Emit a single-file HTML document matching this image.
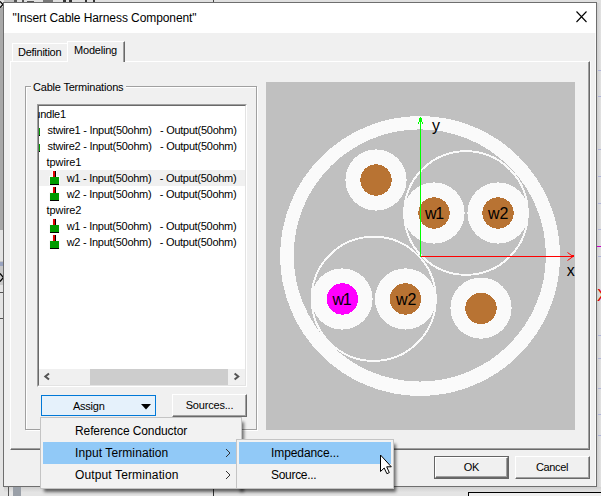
<!DOCTYPE html>
<html><head><meta charset="utf-8"><title>Insert Cable Harness Component</title>
<style>
html,body{margin:0;padding:0;}
body{width:601px;height:496px;overflow:hidden;position:relative;background:#fff;font-family:"Liberation Sans",sans-serif;font-size:11px;color:#000;}
.abs{position:absolute;}
#dlg{left:3px;top:2px;width:594px;height:485px;box-sizing:border-box;background:#f0f0f0;border:1px solid #6e6e6e;box-shadow:none;}
#title{left:0;top:0;width:592px;height:30px;background:#fff;}
#title span{position:absolute;left:8.5px;top:8px;font-size:12px;letter-spacing:-.08px;white-space:nowrap;}
.tab{font-size:11px;white-space:nowrap;letter-spacing:-.2px;}
.row{position:absolute;left:0;height:16px;line-height:16px;white-space:pre;font-size:11px;letter-spacing:-.27px;}
.btn{position:absolute;box-sizing:border-box;background:#f0f0f0;border:1px solid;border-color:#fff #696969 #696969 #fff;text-align:center;font-size:11px;box-shadow:inset -1px -1px 0 #a0a0a0;letter-spacing:-.2px;}
.menu{position:absolute;box-sizing:border-box;background:#f2f2f2;border:1px solid #c4c4c4;box-shadow:3px 4px 3px -1px rgba(0,0,0,.55);}
.mi{position:absolute;font-size:12px;white-space:nowrap;letter-spacing:.35px;line-height:22px;height:22px;}
.hl{position:absolute;background:#91c9f7;height:22px;}
.ico{position:absolute;width:9px;height:14px;}
.ico i{position:absolute;display:block;}
</style></head><body>
<!-- background app bits -->
<div class="abs" style="left:0;top:0;width:601px;height:3px;background:#e0e0e0;"></div><div class="abs" style="left:0;top:0;width:14px;height:3px;background:#c0c0c0;"></div><div class="abs" style="left:14px;top:0;width:3px;height:2px;background:#555;"></div><div class="abs" style="left:22px;top:0;width:2px;height:2px;background:#555;"></div><div class="abs" style="left:27px;top:1px;width:7px;height:1px;background:#555;"></div><div class="abs" style="left:43px;top:0;width:10px;height:2px;background:#777;"></div><div class="abs" style="left:63px;top:0;width:3px;height:2px;background:#333;"></div><div class="abs" style="left:69px;top:0;width:3px;height:2px;background:#333;"></div><div class="abs" style="left:85px;top:0;width:2px;height:2px;background:#333;"></div><div class="abs" style="left:93px;top:0;width:2px;height:2px;background:#333;"></div><div class="abs" style="left:213px;top:0;width:1px;height:2px;background:#444;"></div>
<div class="abs" style="left:0;top:0;width:4px;height:496px;background:#e4e4e4;"></div>
<div class="abs" style="left:0;top:7px;width:4px;height:223px;background:#a9a9a9;"></div>
<div class="abs" style="left:0;top:261px;width:4px;height:24px;background:#c8c8c8;"></div><div class="abs" style="left:0;top:262px;width:4px;height:4px;background:#9aa4c0;"></div><div class="abs" style="left:0;top:292px;width:4px;height:1px;background:#555;"></div><div class="abs" style="left:0;top:318px;width:4px;height:1px;background:#555;"></div>
<div class="abs" style="left:597px;top:3px;width:4px;height:493px;background:linear-gradient(90deg,#cecece,#e2e2e2);"></div><div class="abs" style="left:4px;top:487px;width:597px;height:9px;background:linear-gradient(180deg,#cfcfcf,#e4e4e4 60%);"></div><div class="abs" style="left:213px;top:487px;width:1px;height:9px;background:#333;"></div>
<div class="abs" style="left:468px;top:492px;width:133px;height:4px;border:1px solid #000;border-right:0;border-bottom:0;box-sizing:border-box;background:#efefef;z-index:1"></div>
<div class="abs" style="left:13px;top:487px;width:8px;height:9px;background:#9aa0a8;"></div>
<div class="abs" style="left:8px;top:487px;width:1px;height:9px;background:#555;"></div>
<div class="abs" style="left:598px;top:70px;width:3px;height:1px;background:#b0b4d8;"></div><div class="abs" style="left:598px;top:96px;width:3px;height:1px;background:#b0b4d8;"></div><div class="abs" style="left:598px;top:149px;width:3px;height:1px;background:#b0b4d8;"></div><div class="abs" style="left:598px;top:176px;width:3px;height:1px;background:#b0b4d8;"></div><div class="abs" style="left:598px;top:203px;width:3px;height:1px;background:#b0b4d8;"></div><div class="abs" style="left:598px;top:229px;width:3px;height:1px;background:#b0b4d8;"></div><div class="abs" style="left:598px;top:256px;width:3px;height:1px;background:#b0b4d8;"></div><div class="abs" style="left:598px;top:335px;width:3px;height:1px;background:#b0b4d8;"></div><div class="abs" style="left:598px;top:358px;width:3px;height:1px;background:#b0b4d8;"></div><div class="abs" style="left:598px;top:388px;width:3px;height:1px;background:#b0b4d8;"></div><div class="abs" style="left:598px;top:414px;width:3px;height:1px;background:#b0b4d8;"></div><div class="abs" style="left:598px;top:435px;width:3px;height:1px;background:#b0b4d8;"></div><div class="abs" style="left:597px;top:246px;width:4px;height:1px;background:#c800c8;"></div>
<svg class="abs" style="left:0;top:1px" width="4" height="7" viewBox="0 0 4 7"><path d="M0 0.5 L3 3.5 L0 6.5" stroke="#000" stroke-width="1.2" fill="none"/></svg><svg class="abs" style="left:0;top:273px" width="4" height="9" viewBox="0 0 4 9"><path d="M0 0.5 L3.500 4.500 L0 8.500" stroke="#000" stroke-width="1.2" fill="none"/></svg>
<div class="abs" style="left:597px;top:286px;color:#e00000;font-size:17px;">X</div>

<div class="abs" id="dlg">
 <div class="abs" id="title"><span>"Insert Cable Harness Component"</span>
  <svg class="abs" style="left:572px;top:8px" width="12" height="12" viewBox="0 0 12 12"><path d="M0.5 0.5 L10.5 11 M10.5 0.5 L0.5 11" stroke="#000" stroke-width="1.1" fill="none"/></svg>
 </div>
</div>

<div class="abs" style="left:595px;top:33px;width:1px;height:453px;background:#fafafa;"></div><div class="abs" style="left:590px;top:61px;width:1px;height:389px;background:#fafafa;"></div>
<!-- tab page -->
<div class="abs" style="left:10px;top:61px;width:580px;height:389px;box-sizing:border-box;border:1px solid #fff;border-right:1px solid #696969;border-bottom:1px solid #696969;"></div>
<div class="abs" style="left:11px;top:62px;width:578px;height:387px;box-sizing:border-box;border-right:1px solid #a0a0a0;border-bottom:1px solid #a0a0a0;"></div>
<!-- tabs -->
<div class="abs tab" style="left:12px;top:43px;width:56px;height:18px;box-sizing:border-box;border-left:1px solid #fff;border-top:1px solid #fff;"><span class="abs" style="left:5px;top:2px;letter-spacing:-.25px">Definition</span></div>
<div class="abs tab" style="left:67px;top:41px;width:58px;height:21px;box-sizing:border-box;background:#f0f0f0;border-left:1px solid #fff;border-top:1px solid #fff;border-right:1px solid #696969;box-shadow:inset -1px 0 0 #a0a0a0;"><span class="abs" style="left:6px;top:2px;">Modeling</span></div>

<!-- group box -->
<div class="abs" style="left:25px;top:86px;width:232px;height:344px;box-sizing:border-box;border:1px solid #a0a0a0;box-shadow:1px 1px 0 #fff, inset 1px 1px 0 #fff;"></div>
<div class="abs" style="left:31px;top:81px;background:#f0f0f0;padding:0 3px 0 2px;font-size:11px;white-space:nowrap;letter-spacing:-.2px;">Cable Terminations</div>

<!-- list -->
<div class="abs" id="list" style="left:37px;top:104px;width:210px;height:283px;box-sizing:border-box;background:#fff;border:1px solid #a0a0a0;border-right-color:#fff;border-bottom-color:#fff;overflow:hidden;">
 <div class="abs" style="left:0;top:0;right:0;bottom:0;border:1px solid #696969;border-right-color:#e3e3e3;border-bottom-color:#e3e3e3;"></div>
 <div class="abs" style="left:1px;top:65px;width:206px;height:16px;background:#f0f0f0;"></div>
 <div class="row" style="left:-9.5px;top:1px;">bundle1</div>
 <div class="abs" style="left:1px;top:23px;width:1px;height:7px;background:#009a00;border-bottom:1px solid #000"></div>
 <div class="abs" style="left:1px;top:39px;width:1px;height:7px;background:#009a00;border-bottom:1px solid #000"></div>
 <div class="row" style="left:9.5px;top:17px;">stwire1 - Input(50ohm)   - Output(50ohm)</div>
 <div class="row" style="left:9.5px;top:33px;">stwire2 - Input(50ohm)   - Output(50ohm)</div>
 <div class="row" style="left:8.6px;letter-spacing:-.1px;top:49px;">tpwire1</div>
 <div class="row" style="left:28.7px;top:65px;">w1 - Input(50ohm)   - Output(50ohm)</div>
 <div class="row" style="left:28.7px;top:81px;">w2 - Input(50ohm)   - Output(50ohm)</div>
 <div class="row" style="left:8.6px;letter-spacing:-.1px;top:97px;">tpwire2</div>
 <div class="row" style="left:28.7px;top:113px;">w1 - Input(50ohm)   - Output(50ohm)</div>
 <div class="row" style="left:28.7px;top:129px;">w2 - Input(50ohm)   - Output(50ohm)</div>
 <div class="ico" style="left:12px;top:66px;"><i style="left:0;top:6px;width:9px;height:7px;background:#009a00;box-shadow:0 0 0 1px #fafafa"></i><i style="left:3px;top:0;width:2px;height:6px;background:#e00000;border-right:1px solid #000;box-shadow:-1px 0 0 #fafafa,1px 0 0 #fafafa,0 -1px 0 #fafafa"></i><i style="left:0;top:13px;width:9px;height:1px;background:#000;"></i></div>
 <div class="ico" style="left:12px;top:82px;"><i style="left:0;top:6px;width:9px;height:7px;background:#009a00;box-shadow:0 0 0 1px #fafafa"></i><i style="left:3px;top:0;width:2px;height:6px;background:#e00000;border-right:1px solid #000;box-shadow:-1px 0 0 #fafafa,1px 0 0 #fafafa,0 -1px 0 #fafafa"></i><i style="left:0;top:13px;width:9px;height:1px;background:#000;"></i></div>
 <div class="ico" style="left:12px;top:114px;"><i style="left:0;top:6px;width:9px;height:7px;background:#009a00;box-shadow:0 0 0 1px #fafafa"></i><i style="left:3px;top:0;width:2px;height:6px;background:#e00000;border-right:1px solid #000;box-shadow:-1px 0 0 #fafafa,1px 0 0 #fafafa,0 -1px 0 #fafafa"></i><i style="left:0;top:13px;width:9px;height:1px;background:#000;"></i></div>
 <div class="ico" style="left:12px;top:130px;"><i style="left:0;top:6px;width:9px;height:7px;background:#009a00;box-shadow:0 0 0 1px #fafafa"></i><i style="left:3px;top:0;width:2px;height:6px;background:#e00000;border-right:1px solid #000;box-shadow:-1px 0 0 #fafafa,1px 0 0 #fafafa,0 -1px 0 #fafafa"></i><i style="left:0;top:13px;width:9px;height:1px;background:#000;"></i></div>
 <!-- scrollbar -->
 <div class="abs" style="left:1px;top:264px;width:206px;height:16px;background:#f0f0f0;"></div>
 <div class="abs" style="left:52px;top:264px;width:138px;height:16px;background:#cdcdcd;"></div>
 <svg class="abs" style="left:1px;top:264px" width="206" height="17" viewBox="0 0 206 17"><path d="M10 4.4 L6.3 7.5 L10 10.6 M195.6 4.4 L199.3 7.5 L195.6 10.6" stroke="#555" stroke-width="2" fill="none"/></svg>
</div>

<!-- preview -->
<svg class="abs" style="left:266px;top:82px" width="309" height="348" viewBox="266 82 309 348" shape-rendering="crispEdges">
 <rect x="266" y="82" width="309" height="348" fill="#c0c0c0"/>
 <circle cx="420.05" cy="256" r="140" fill="#fafafa"/><circle cx="419.8" cy="255.45" r="126.1" fill="#c0c0c0"/>
 <g fill="#fafafa">
  <circle cx="376" cy="180" r="30.6"/><circle cx="434" cy="213" r="30.6"/><circle cx="498" cy="213" r="30.6"/>
  <circle cx="342" cy="299" r="30.6"/><circle cx="405.5" cy="299" r="30.6"/><circle cx="481" cy="308.1" r="30.6"/>
 </g>
 <circle cx="466" cy="213" r="61.8" fill="none" stroke="#fafafa" stroke-width="1.9"/>
 <circle cx="373.7" cy="298.8" r="62.1" fill="none" stroke="#fafafa" stroke-width="1.9"/>
 <g fill="#b87333">
  <circle cx="376" cy="180" r="15.7"/><circle cx="434" cy="213" r="15.7"/><circle cx="498" cy="213" r="15.7"/>
  <circle cx="405.5" cy="299" r="15.7"/><circle cx="481" cy="308.3" r="15.7"/>
 </g>
 <circle cx="342.5" cy="299" r="15.7" fill="#ff00ff"/>
 <g fill="#00ff00"><rect x="420" y="117" width="1" height="140"/><rect x="419" y="118" width="3" height="4"/><rect x="418" y="122" width="1" height="2"/><rect x="422" y="122" width="1" height="2"/></g>
 <rect x="421" y="256" width="152" height="1" fill="#ff0000"/><rect x="572" y="255" width="2" height="2" fill="#ff0000"/>
 <path d="M567.5 252.5 L573 256.5 L567.5 260.5" stroke="#ff0000" stroke-width="1" fill="none" shape-rendering="auto"/>
 <g font-family="Liberation Sans, sans-serif" font-size="16" fill="#000">
  <text x="425" y="219" letter-spacing="-1.2">w1</text><text x="488" y="219">w2</text>
  <text x="332.4" y="305" letter-spacing="-1.2">w1</text><text x="396" y="305">w2</text>
  <text x="432" y="130.500">y</text><text x="566.7" y="276" letter-spacing="-.5">x</text>
 </g>
</svg>

<!-- buttons -->
<div class="abs" style="left:41px;top:395px;width:115px;height:21px;box-sizing:border-box;background:#e5f1fb;border:1px solid #0078d7;line-height:20px;letter-spacing:-.25px;"><span style="position:absolute;left:31px;">Assign</span>
 <svg class="abs" style="left:98.5px;top:8px" width="10" height="6" viewBox="0 0 10 6"><path d="M0 0 H10 L5 5.500 Z" fill="#000"/></svg></div>
<div class="btn" style="left:172px;top:394px;width:75px;height:23px;line-height:20px;">Sources...</div>
<div class="abs" style="left:434px;top:456px;width:75px;height:23px;box-sizing:border-box;border:1px solid #646464;"></div>
<div class="btn" style="left:435px;top:457px;width:73px;height:21px;line-height:18px;">OK</div>
<div class="btn" style="left:515px;top:456px;width:75px;height:23px;line-height:20px;letter-spacing:-.35px;text-indent:-1px">Cancel</div>

<!-- menus -->
<div class="menu" style="left:40px;top:417px;width:202px;height:72px;">
 <div class="hl" style="left:2px;top:24px;width:196px;"></div>
 <div class="mi" style="left:34px;top:2px;letter-spacing:-.1px">Reference Conductor</div>
 <div class="mi" style="left:34px;top:24px;letter-spacing:.09px">Input Termination</div>
 <div class="mi" style="left:34px;top:46px;letter-spacing:.13px">Output Termination</div>
 <svg class="abs" style="left:184px;top:30px" width="6" height="10" viewBox="0 0 6 10"><path d="M1 1 L5 5 L1 9" stroke="#333" stroke-width="1" fill="none"/></svg>
 <svg class="abs" style="left:184px;top:52px" width="6" height="10" viewBox="0 0 6 10"><path d="M1 1 L5 5 L1 9" stroke="#333" stroke-width="1" fill="none"/></svg>
</div>
<div class="menu" style="left:236px;top:439px;width:158px;height:50px;">
 <div class="hl" style="left:2px;top:2px;width:152px;"></div>
 <div class="mi" style="left:34px;top:2px;letter-spacing:-.09px">Impedance...</div>
 <div class="mi" style="left:34px;top:24px;letter-spacing:-.3px">Source...</div>
</div>
<!-- cursor -->
<svg class="abs" style="left:379px;top:454px" width="14" height="22" viewBox="0 0 14 22"><path d="M1.500 1 V17.500 L5.200 14 L7.900 19.700 L10.300 18.600 L7.700 12.800 H12.300 Z" fill="#fff" stroke="#000" stroke-width="1"/></svg>
</body></html>
